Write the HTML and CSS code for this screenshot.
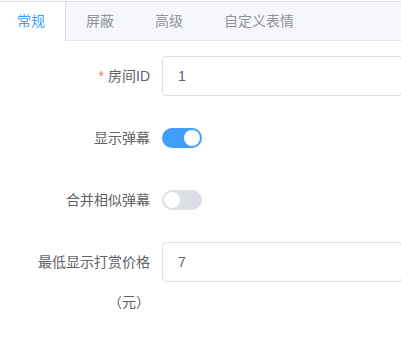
FILE: index.html
```html
<!DOCTYPE html>
<html lang="zh-CN">
<head>
<meta charset="utf-8">
<link rel="stylesheet" href="styles.css">
</head>
<body>
<div class="card">
  <div class="tabs-header">
    <div class="tab active">常规</div>
    <div class="tab">屏蔽</div>
    <div class="tab">高级</div>
    <div class="tab">自定义表情</div>
  </div>
  <div class="tabs-content">
    <form class="form">
      <div class="form-item">
        <label class="label"><span class="req">*</span>房间ID</label>
        <div class="control"><input class="input" type="text" value="1"></div>
      </div>
      <div class="form-item">
        <label class="label">显示弹幕</label>
        <div class="control"><span class="switch on"><span class="knob"></span></span></div>
      </div>
      <div class="form-item">
        <label class="label">合并相似弹幕</label>
        <div class="control"><span class="switch"><span class="knob"></span></span></div>
      </div>
      <div class="form-item">
        <label class="label">最低显示打赏价格（元）</label>
        <div class="control"><input class="input" type="text" value="7"></div>
      </div>
    </form>
  </div>
</div>
</body>
</html>
```

FILE: styles.css
```css
html, body {
  margin: 0;
  padding: 0;
  background: #ffffff;
  overflow: hidden;
}
body {
  height: 337px;
  font-family: "Liberation Sans", "Noto Sans CJK SC", sans-serif;
  font-size: 14px;
  color: #606266;
}
.card {
  margin-top: 1px;
  margin-left: -4px;
  width: 420px;
  border: 1px solid #dcdfe6;
  border-bottom: none;
  background: #fff;
}
.tabs-header {
  display: flex;
  height: 38px;
  background: #f5f7fa;
  border-bottom: 1px solid #e4e7ed;
}
.tab {
  height: 39px;
  line-height: 38px;
  padding: 0 20px;
  border-left: 1px solid transparent;
  border-right: 1px solid transparent;
  color: #909399;
  font-size: 14px;
  margin-left: -1px;
}
.tab.active {
  background: #fff;
  color: #409eff;
  border-right-color: #dcdfe6;
  border-left-color: #dcdfe6;
}
.tabs-content {
  padding: 15px 15px 0;
}
.form {
  margin: 0;
}
.form-item {
  display: flex;
  margin-bottom: 22px;
}
.form-item:last-child {
  margin-bottom: 0;
}
.label {
  flex: 0 0 150px;
  box-sizing: border-box;
  padding-right: 12px;
  text-align: right;
  line-height: 40px;
  font-size: 14px;
  color: #606266;
}
.req {
  color: #f56c6c;
  margin-right: 4px;
}
.control {
  flex: 1;
  height: 40px;
  display: flex;
  align-items: center;
}
.input {
  width: 100%;
  box-sizing: border-box;
  height: 40px;
  border: 1px solid #dcdfe6;
  border-radius: 4px;
  padding: 0 15px;
  font-family: "Liberation Sans", "Noto Sans CJK SC", sans-serif;
  font-size: 14px;
  color: #606266;
  outline: none;
  background: #fff;
}
.switch {
  position: relative;
  display: inline-block;
  width: 40px;
  height: 20px;
  border-radius: 10px;
  background: #dcdfe6;
}
.switch.on {
  background: #409eff;
}
.knob {
  position: absolute;
  top: 2px;
  left: 2px;
  width: 16px;
  height: 16px;
  border-radius: 50%;
  background: #fff;
}
.switch.on .knob {
  left: 22px;
}
```
